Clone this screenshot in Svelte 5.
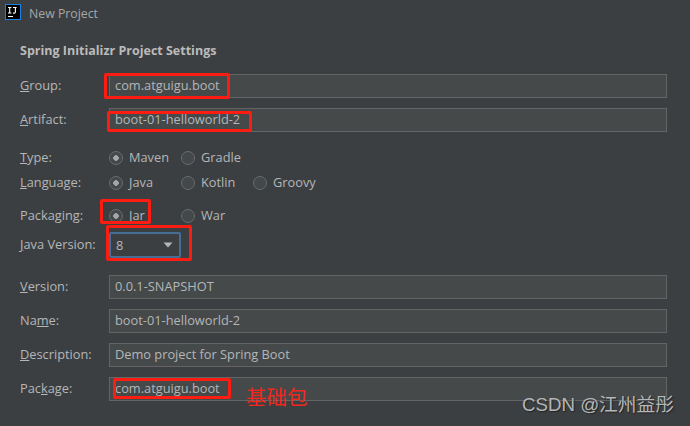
<script>
  const top = [
    { u: 'G', rest: 'roup:', value: 'com.atguigu.boot' },
    { u: 'A', rest: 'rtifact:', value: 'boot-01-helloworld-2' }
  ];
  const bottom = [
    { pre: '', u: 'V', rest: 'ersion:', value: '0.0.1-SNAPSHOT' },
    { pre: 'Na', u: 'm', rest: 'e:', value: 'boot-01-helloworld-2' },
    { pre: '', u: 'D', rest: 'escription:', value: 'Demo project for Spring Boot' },
    { pre: 'Pac', u: 'k', rest: 'age:', value: 'com.atguigu.boot' }
  ];
  const marks = ['m1', 'm2', 'm3', 'm4', 'm5'];
</script>

<div class="win">
  <header class="title">
    <svg class="logo" width="16" height="16" viewBox="0 0 16 16">
      <rect x="0.5" y="0.5" width="15" height="15" fill="#000" stroke="#1f7fe0" />
      <path d="M3 3.5h3.4M4.7 3.5v5.5M3 9h3.4M8 3.5h3.6M10.4 3.5v4.4q0 1.2-1.2 1.2h-1.2M3 12.5h5" stroke="#fff" stroke-width="1.1" fill="none" />
    </svg>
    <span class="ttext">New Project</span>
  </header>

  <h1>Spring Initializr Project Settings</h1>

  <section class="fields">
    {#each top as f}
      <div class="row">
        <span class="lab"><u>{f.u}</u>{f.rest}</span>
        <div class="input">{f.value}</div>
      </div>
    {/each}
  </section>

  <section class="radios">
    <div class="rrow">
      <span class="lab"><u>T</u>ype:</span>
      <span class="opt on"><span>Maven</span></span><span class="opt"><span>Gradle</span></span>
    </div>
    <div class="rrow">
      <span class="lab"><u>L</u>anguage:</span>
      <span class="opt on"><span>Java</span></span><span class="opt"><span>Kotlin</span></span><span class="opt"><span>Groovy</span></span>
    </div>
    <div class="rrow pack">
      <span class="lab">Packaging:</span>
      <span class="opt on"><span>Jar</span></span><span class="opt"><span>War</span></span>
    </div>
    <div class="jrow">
      <span class="lab"><u>J</u>ava Version:</span>
      <div class="select">
        <span>8</span>
        <svg width="10" height="6" viewBox="0 0 10 6"><path d="M0.5 0.5h9L5 5.5z" fill="#b4b6b8" /></svg>
      </div>
    </div>
  </section>

  <section class="fields low">
    {#each bottom as f}
      <div class="row">
        <span class="lab">{f.pre}<u>{f.u}</u>{f.rest}</span>
        <div class="input">{f.value}</div>
      </div>
    {/each}
  </section>

  {#each marks as m}
    <div class="mark {m}"></div>
  {/each}
  <span class="note">基础包</span>
  <span class="wm">CSDN @江州益彤</span>
</div>

<style>
  :global(body) {
    margin: 0;
    background: #3c3f41;
  }
  .win {
    position: relative;
    width: 690px;
    height: 426px;
    overflow: hidden;
    background: #3c3f41;
    color: #b4b6b8;
    font: 12.8px/16px "Open Sans", "Noto Sans", sans-serif;
  }
  .title {
    display: flex;
    align-items: center;
    gap: 8px;
    height: 16px;
    padding: 4px 0 1px 5px;
    font-size: 12.3px;
    color: #a5a7a9;
  }
  .ttext {
    padding-top: 3px;
  }
  .logo {
    flex: none;
  }
  h1 {
    margin: 22px 0 0 20px;
    font-size: 12.5px;
    line-height: 16px;
    font-weight: 700;
    color: #bbbbbb;
  }
  .fields {
    display: flex;
    flex-direction: column;
    gap: 10px;
    margin: 15px 23px 0 20px;
  }
  .low {
    margin-top: 17px;
  }
  .row {
    display: flex;
    align-items: center;
    height: 24px;
  }
  .lab {
    flex: none;
    width: 89px;
    padding-bottom: 2px;
  }
  .input {
    flex: 1;
    box-sizing: border-box;
    height: 24px;
    padding: 0 5px;
    line-height: 20px;
    border: 1px solid #646464;
    background: #45494a;
  }
  .radios {
    margin: 13px 0 0 20px;
  }
  .rrow {
    display: flex;
    align-items: center;
    height: 25px;
  }
  .pack {
    margin-top: 8px;
  }
  .opt {
    display: flex;
    align-items: center;
    gap: 6px;
    width: 72px;
  }
  .opt span {
    padding-bottom: 2px;
  }
  .opt::before {
    content: "";
    box-sizing: border-box;
    width: 14px;
    height: 14px;
    border: 1px solid #6b6b6b;
    border-radius: 50%;
    background: #43494a;
  }
  .on::before {
    background: radial-gradient(circle, #a7a7a7 0 2.5px, #43494a 3px);
  }
  .jrow {
    display: flex;
    align-items: center;
    height: 26px;
    margin-top: 4px;
  }
  .select {
    display: flex;
    align-items: center;
    justify-content: space-between;
    box-sizing: border-box;
    width: 72px;
    height: 26px;
    padding: 0 6px 0 5px;
    border: 2px solid #466d94;
    border-radius: 2px;
    background: #3c3f41;
  }
  .mark {
    position: absolute;
    box-sizing: border-box;
    border: 3px solid #fb1d12;
    border-radius: 2px;
  }
  .m1 { left: 104px; top: 73px; width: 126px; height: 26px; }
  .m2 { left: 107px; top: 111px; width: 145px; height: 21px; }
  .m3 { left: 100px; top: 199px; width: 51px; height: 25px; }
  .m4 { left: 106px; top: 225px; width: 86px; height: 36px; }
  .m5 { left: 113px; top: 378px; width: 118px; height: 21px; }
  .note {
    position: absolute;
    left: 246px;
    top: 383px;
    font: 20.5px/26px "Noto Sans CJK SC", sans-serif;
    color: #f0281e;
  }
  .wm {
    position: absolute;
    left: 522px;
    top: 394px;
    font: 18.7px/22px "Liberation Sans", "Noto Sans CJK SC", sans-serif;
    color: #b4b6b8;
    text-shadow: 1px 1px 1px #222;
    white-space: nowrap;
  }
</style>
